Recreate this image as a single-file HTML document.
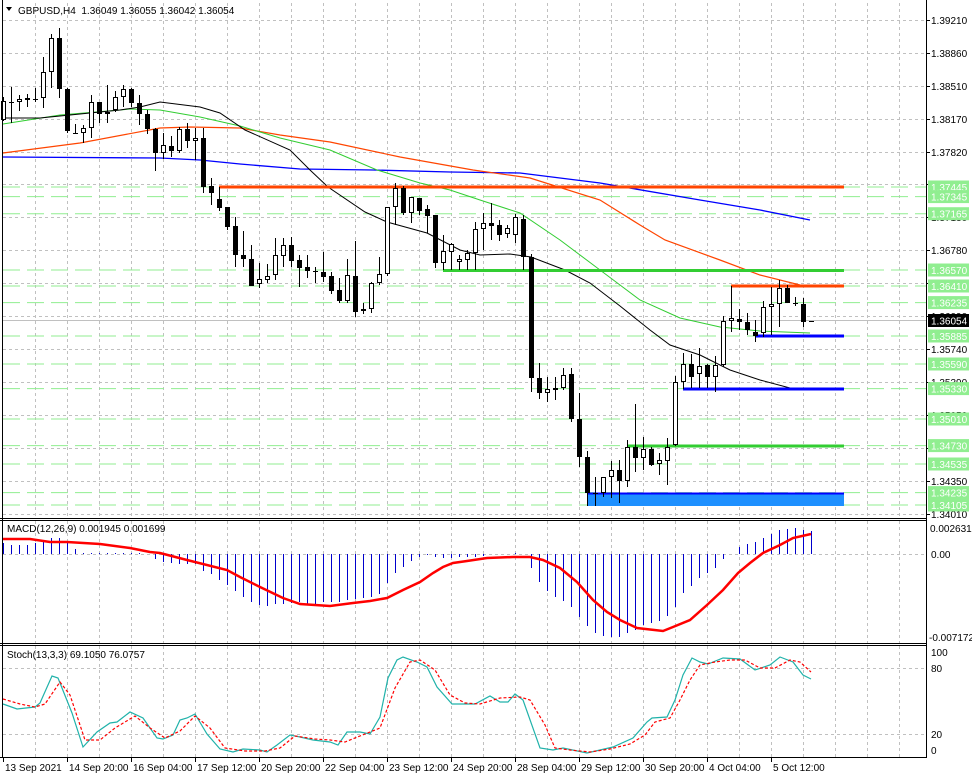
<!DOCTYPE html>
<html><head><meta charset="utf-8"><style>
html,body{margin:0;padding:0;background:#fff}
svg{display:block}
text{font-family:"Liberation Sans",sans-serif;font-size:10px}
</style></head><body>
<svg id="c" width="972" height="778" xmlns="http://www.w3.org/2000/svg"></svg>
<script>
var s='';
function L(x1,y1,x2,y2,c,w,d){s+='<line x1="'+x1+'" y1="'+y1+'" x2="'+x2+'" y2="'+y2+'" stroke="'+c+'" stroke-width="'+(w||1)+'"'+(d?' stroke-dasharray="'+d+'"':'')+'/>';}
function P(pts,c,w,d){s+='<polyline fill="none" points="'+pts.map(function(p){return p.join(',')}).join(' ')+'" stroke="'+c+'" stroke-width="'+(w||1)+'"'+(d?' stroke-dasharray="'+d+'"':'')+'/>';}
function R(x,y,w,h,f,st){s+='<rect x="'+x+'" y="'+y+'" width="'+w+'" height="'+h+'" fill="'+f+'"'+(st?' stroke="'+st+'"':'')+'/>';}
function T(x,y,t,c,a){s+='<text x="'+x+'" y="'+y+'" fill="'+(c||'#000')+'"'+(a?' text-anchor="'+a+'"':'')+'>'+t+'</text>';}
var G='#c0c0c0';
var gy=[20,53,86,119,152,184,217,250,283,316,349,382,415,448,481,514];
var gl=['1.39210','1.38860','1.38510','1.38170','1.37820','1.37480','1.37130','1.36780','1.36440','1.36090','1.35740','1.35390','1.35050','1.34700','1.34350','1.34010'];
for(var x=35;x<926;x+=32){L(x+.5,3,x+.5,518,G,1,'3,3');L(x+.5,521,x+.5,643,G,1,'3,3');L(x+.5,646,x+.5,757,G,1,'3,3');}
gy.forEach(function(y){L(3,y+.5,926,y+.5,G,1,'3,3');});
L(3,554.5,926,554.5,G,1,'3,3');L(3,668.5,926,668.5,G,1,'3,3');L(3,734.5,926,734.5,G,1,'3,3');
var lv=[187,196.6,213.7,270,286,302.6,336,364,388.6,419,445.6,464,492.6,505];
lv.forEach(function(y){L(3,y,926,y,'#90EE90',1,'17,7');});
L(3,320.5,926,320.5,'#c0c0c0',1);
P([[3,157],[160,158],[200,160],[240,164],[300,169],[373,170],[450,172],[520,173],[600,183],[700,200],[760,210],[810,220]],'#0000FF',1.3);
P([[3,153],[80,143],[160,128],[190,127],[240,128],[280,135],[330,142],[400,157],[473,170],[530,178],[600,200],[640,225],[665,240],[720,260],[760,275],[800,285]],'#FF4500',1.2);
P([[3,124],[60,115],[120,110],[130,109],[160,110],[200,117],[240,126],[280,138],[330,150],[377,170],[420,183],[450,190],[480,200],[520,213],[560,240],[600,270],[640,300],[680,318],[720,327],[760,331],[810,333]],'#32CD32',1);
P([[3,118],[40,118],[60,116],[120,110],[140,107],[160,102],[200,107],[220,113],[245,130],[290,150],[310,170],[328,187],[365,212],[387,222],[427,233],[460,250],[480,255],[510,254],[531,257],[565,270],[590,283],[620,306],[650,330],[670,345],[700,355],[730,370],[760,380],[790,388],[812,388]],'#000',1);
L(219,187,844,187,'#FF4500',3);L(219.5,187,219.5,198,'#000',1);
L(443,270.5,844,270.5,'#32CD32',3);
L(731,286,844,286,'#FF4500',3);L(731.5,286,731.5,300,'#000',1);
L(755,336,844,336,'#0000FF',3);
L(683,389,844,389,'#0000FF',3);L(683.5,389,683.5,364,'#000',1);
L(627,446,844,446,'#32CD32',3);
R(587,493,257,13,'#1E90FF');L(587,493.5,844,493.5,'#0000FF',2);
var C=[[120,101,97,121],[102,102,87,123],[102,99,95,111],[100,98,94,107],[99,99,88,102],[98,72,57,108],[72,38,34,88],[38,89,28,98],[89,131,88,133],[133,133,124,133],[133,128,125,143],[128,102,95,138],[102,114,102,123],[114,112,85,123],[110,97,91,112],[97,89,85,107],[89,103,88,107],[103,114,95,125],[114,129,110,134],[129,153,128,171],[153,145,133,159],[146,151,136,157],[151,129,127,153],[129,141,123,148],[141,138,128,160],[138,187,128,193],[186,193,178,205],[199,208,188,211],[207,227,207,230],[226,255,217,267],[255,259,231,267],[259,286,245,286],[284,279,263,288],[280,276,264,283],[275,255,238,280],[256,245,238,267],[245,261,237,267],[260,268,255,287],[267,271,255,278],[271,271,267,283],[272,277,252,282],[276,291,272,294],[290,301,278,303],[301,275,259,303],[276,312,241,317],[311,309,303,314],[309,283,282,313],[283,274,257,285],[274,207,207,276],[207,188,183,225],[188,213,186,215],[213,197,197,223],[198,211,198,215],[209,216,205,233],[215,263,215,268],[263,251,235,270],[252,244,243,270],[262,259,255,270],[260,253,250,270],[253,229,222,270],[229,223,213,250],[223,226,203,240],[225,235,220,241],[234,228,225,238],[235,217,214,243],[219,257,215,270],[257,378,254,392],[378,393,363,399],[393,389,377,402],[390,388,377,400],[388,375,368,390],[374,419,368,422],[419,457,393,467],[457,493,451,506],[493,493,477,506],[493,477,477,497],[477,470,461,498],[470,481,460,503],[481,447,440,487],[447,458,404,472],[458,449,437,470],[449,465,447,466],[464,460,453,475],[461,447,438,485],[445,382,376,446],[382,364,353,388],[364,377,354,388],[374,366,348,388],[365,377,364,388],[377,365,356,392],[365,321,316,367],[321,318,287,332],[319,322,309,330],[322,330,313,335],[332,336,320,342],[333,307,301,337],[307,304,287,335],[304,288,280,327],[288,303,285,303],[303,303,297,306],[304,322,298,327],[321,321,321,321]];
C.forEach(function(c,k){var x=3.5+8*k;L(x,c[2],x,c[3],'#000',1);var t=Math.min(c[0],c[1]),b=Math.max(c[0],c[1]);
 if(b-t<1){L(x-2.5,t+.5,x+2.5,t+.5,'#000',1);}else{var bull=c[1]<c[0];R(x-2,t+.5,4,b-t-1,bull?'#fff':'#000','#000');}});
var M=[543,545,545,545,543,541,538,538,543,549,553,553,553,553,553,553,553,553,554,559,562,563,564,564,564,571,574,580,585,591,597,602,605,606,604,604,603,602,604,605,602,602,602,600,599,598,597,594,583,573,567,561,557,555,557,558,558,557,557,557,556,554,554,554,553,554,568,582,591,597,601,607,617,626,633,636,637,637,633,630,625,623,621,616,607,593,586,578,573,568,559,554,547,544,542,538,534,530,529,528,530,531];
M.forEach(function(y,k){var x=3.5+8*k;if(Math.abs(y-554)>=1)L(x,554,x,y,'#0000CC',1);});
P([[3,539],[30,539],[50,542],[67,542],[100,544],[130,548],[150,552],[160,553],[187,560],[227,570],[240,577],[260,587],[283,598],[300,604],[330,606],[353,603],[370,601],[387,598],[403,590],[420,582],[433,573],[443,567],[453,563],[467,561],[487,558],[513,557],[530,557],[543,560],[560,568],[577,582],[593,600],[607,612],[620,620],[637,628],[663,631],[673,627],[690,620],[707,605],[723,590],[738,573],[750,563],[763,553],[780,545],[793,538],[811,534]],'#FF0000',2.5);
P([[3,704],[17,709],[35,707],[40,703],[52,676],[58,678],[72,713],[83,747],[97,732],[110,723],[117,722],[130,712],[143,718],[157,738],[163,739],[173,735],[180,720],[187,718],[195,714],[207,734],[220,749],[233,752],[243,749],[260,750],[267,752],[277,745],[290,735],[300,737],[313,740],[330,742],[338,745],[347,732],[360,732],[370,734],[380,717],[388,678],[397,660],[403,657],[417,662],[427,667],[437,687],[452,704],[475,704],[490,696],[500,702],[508,702],[515,694],[523,700],[540,748],[553,750],[563,748],[587,753],[613,747],[633,738],[647,722],[652,718],[667,717],[675,700],[683,675],[692,658],[700,662],[708,664],[723,658],[740,659],[755,670],[770,665],[780,657],[793,662],[803,675],[811,679]],'#20B2AA',1.2);
P([[3,699],[20,704],[35,707],[45,704],[60,682],[70,695],[85,740],[100,740],[115,728],[135,716],[150,728],[165,738],[180,731],[195,716],[210,728],[225,748],[245,751],[265,751],[280,748],[295,736],[315,739],[330,740],[345,742],[360,736],[380,728],[395,688],[410,662],[420,660],[435,670],[450,695],[465,703],[480,704],[500,698],[520,697],[530,700],[545,725],[555,748],[570,750],[590,752],[610,749],[630,744],[645,735],[655,722],[670,718],[680,700],[690,680],[700,665],[715,662],[730,660],[745,660],[760,668],[775,668],[790,660],[800,662],[811,672]],'#FF0000',1.2,'3,2');
R(0,0,972,2,'#fff');
L(2.5,0,2.5,757,'#000',1);
L(926.5,0,926.5,757,'#000',1);
L(0,518.5,927,518.5,'#000',1);L(0,520.5,927,520.5,'#000',1);
L(0,643.5,927,643.5,'#000',1);L(0,645.5,927,645.5,'#000',1);
L(0,757.5,927,757.5,'#000',1);
gy.forEach(function(y,i){L(926,y+.5,930,y+.5,'#000',1);T(931,y+4,gl[i]);});
var gl2=[[187,'1.37445'],[196.6,'1.37345'],[213.7,'1.37165'],[270,'1.36570'],[286,'1.36410'],[302.6,'1.36235'],[336,'1.35885'],[364,'1.35590'],[388.6,'1.35330'],[419,'1.35010'],[445.6,'1.34730'],[464,'1.34535'],[492.6,'1.34235'],[505,'1.34105']];
gl2.forEach(function(a){R(928,a[0]-6.5,41,13,'#90EE90');T(931,a[0]+4,a[1],'#fff');});
R(928,314,41,13,'#000');T(931,324.5,'1.36054','#fff');
T(930,532,'0.002631');T(931,558,'0.00');T(929,641,'-0.007172');
T(931,656,'100');T(931,672,'80');T(931,738,'20');T(931,754,'0');
var tl=[[3,'13 Sep 2021'],[67,'14 Sep 20:00'],[131,'16 Sep 04:00'],[195,'17 Sep 12:00'],[259,'20 Sep 20:00'],[323,'22 Sep 04:00'],[387,'23 Sep 12:00'],[451,'24 Sep 20:00'],[515,'28 Sep 04:00'],[579,'29 Sep 12:00'],[643,'30 Sep 20:00'],[707,'4 Oct 04:00'],[771,'5 Oct 12:00']];
tl.forEach(function(a){L(a[0]+.5,757,a[0]+.5,762,'#000',1);T(a[0]+2,771,a[1]);});
s+='<path d="M6 7 L12 7 L9 11 Z" fill="#000"/>';
T(18,14,'GBPUSD,H4&#160;&#160;1.36049 1.36055 1.36042 1.36054');
T(7,532,'MACD(12,26,9) 0.001945 0.001699');
T(7,658,'Stoch(13,3,3) 69.1050 76.0757');
document.getElementById('c').innerHTML=s;
</script>
</body></html>
